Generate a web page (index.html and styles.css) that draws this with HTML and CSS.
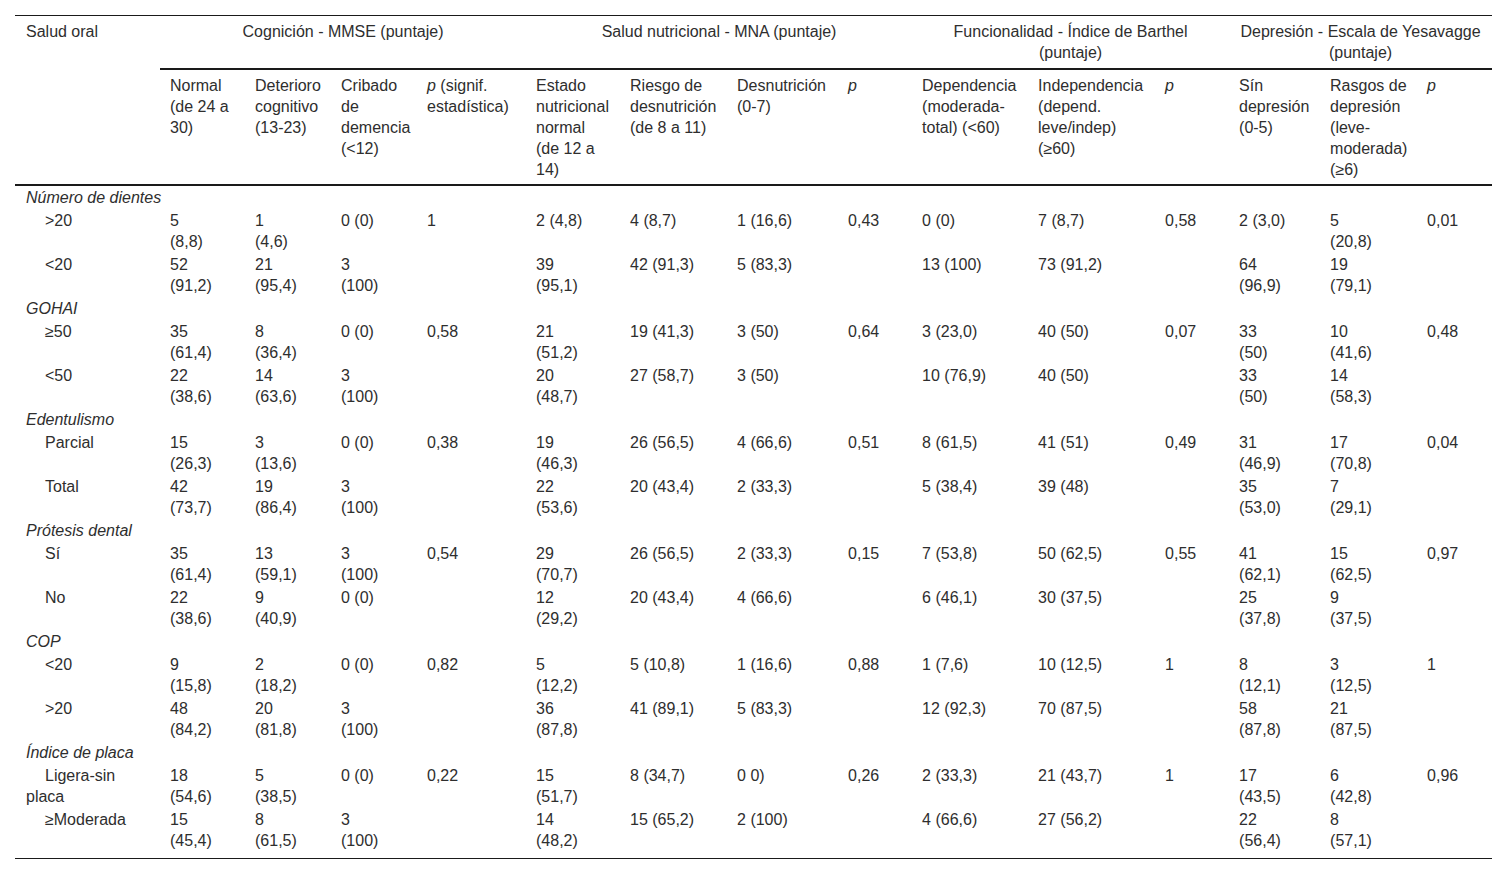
FILE: index.html
```html
<!DOCTYPE html>
<html lang="es">
<head>
<meta charset="utf-8">
<title>Salud oral</title>
<link rel="stylesheet" href="styles.css">
</head>
<body>
<div class="wrap">
<table class="tbl">
<colgroup>
<col class="c1"><col class="c2"><col class="c3"><col class="c4"><col class="c5"><col class="c6"><col class="c7"><col class="c8"><col class="c9"><col class="c10"><col class="c11"><col class="c12"><col class="c13"><col class="c14"><col class="c15">
</colgroup>
<thead>
<tr class="hr1">
<th class="h-first" rowspan="2">Salud oral</th>
<th class="h-group" colspan="4">Cognición - MMSE (puntaje)</th>
<th class="h-group" colspan="4">Salud nutricional - MNA (puntaje)</th>
<th class="h-group" colspan="3">Funcionalidad - Índice de Barthel<br>(puntaje)</th>
<th class="h-group" colspan="3">Depresión - Escala de Yesavagge<br>(puntaje)</th>
</tr>
<tr class="hr2">
<th class="h-sub">Normal<br>(de 24 a<br>30)</th>
<th class="h-sub">Deterioro<br>cognitivo<br>(13-23)</th>
<th class="h-sub">Cribado<br>de<br>demencia<br>(&lt;12)</th>
<th class="h-sub"><i>p</i> (signif.<br>estadística)</th>
<th class="h-sub">Estado<br>nutricional<br>normal<br>(de 12 a<br>14)</th>
<th class="h-sub">Riesgo de<br>desnutrición<br>(de 8 a 11)</th>
<th class="h-sub">Desnutrición<br>(0-7)</th>
<th class="h-sub"><i>p</i></th>
<th class="h-sub">Dependencia<br>(moderada-<br>total) (&lt;60)</th>
<th class="h-sub">Independencia<br>(depend.<br>leve/indep)<br>(≥60)</th>
<th class="h-sub"><i>p</i></th>
<th class="h-sub">Sín<br>depresión<br>(0-5)</th>
<th class="h-sub">Rasgos de<br>depresión<br>(leve-<br>moderada)<br>(≥6)</th>
<th class="h-sub"><i>p</i></th>
</tr>
</thead>
<tbody>
<tr class="cat"><td colspan="15">Número de dientes</td></tr>
<tr><td class="lbl">&gt;20</td><td>5<br>(8,8)</td><td>1<br>(4,6)</td><td>0 (0)</td><td>1</td><td>2 (4,8)</td><td>4 (8,7)</td><td>1 (16,6)</td><td>0,43</td><td>0 (0)</td><td>7 (8,7)</td><td>0,58</td><td>2 (3,0)</td><td>5<br>(20,8)</td><td>0,01</td></tr>
<tr><td class="lbl">&lt;20</td><td>52<br>(91,2)</td><td>21<br>(95,4)</td><td>3<br>(100)</td><td></td><td>39<br>(95,1)</td><td>42 (91,3)</td><td>5 (83,3)</td><td></td><td>13 (100)</td><td>73 (91,2)</td><td></td><td>64<br>(96,9)</td><td>19<br>(79,1)</td><td></td></tr>
<tr class="cat"><td colspan="15">GOHAI</td></tr>
<tr><td class="lbl">≥50</td><td>35<br>(61,4)</td><td>8<br>(36,4)</td><td>0 (0)</td><td>0,58</td><td>21<br>(51,2)</td><td>19 (41,3)</td><td>3 (50)</td><td>0,64</td><td>3 (23,0)</td><td>40 (50)</td><td>0,07</td><td>33<br>(50)</td><td>10<br>(41,6)</td><td>0,48</td></tr>
<tr><td class="lbl">&lt;50</td><td>22<br>(38,6)</td><td>14<br>(63,6)</td><td>3<br>(100)</td><td></td><td>20<br>(48,7)</td><td>27 (58,7)</td><td>3 (50)</td><td></td><td>10 (76,9)</td><td>40 (50)</td><td></td><td>33<br>(50)</td><td>14<br>(58,3)</td><td></td></tr>
<tr class="cat"><td colspan="15">Edentulismo</td></tr>
<tr><td class="lbl">Parcial</td><td>15<br>(26,3)</td><td>3<br>(13,6)</td><td>0 (0)</td><td>0,38</td><td>19<br>(46,3)</td><td>26 (56,5)</td><td>4 (66,6)</td><td>0,51</td><td>8 (61,5)</td><td>41 (51)</td><td>0,49</td><td>31<br>(46,9)</td><td>17<br>(70,8)</td><td>0,04</td></tr>
<tr><td class="lbl">Total</td><td>42<br>(73,7)</td><td>19<br>(86,4)</td><td>3<br>(100)</td><td></td><td>22<br>(53,6)</td><td>20 (43,4)</td><td>2 (33,3)</td><td></td><td>5 (38,4)</td><td>39 (48)</td><td></td><td>35<br>(53,0)</td><td>7<br>(29,1)</td><td></td></tr>
<tr class="cat"><td colspan="15">Prótesis dental</td></tr>
<tr><td class="lbl">Sí</td><td>35<br>(61,4)</td><td>13<br>(59,1)</td><td>3<br>(100)</td><td>0,54</td><td>29<br>(70,7)</td><td>26 (56,5)</td><td>2 (33,3)</td><td>0,15</td><td>7 (53,8)</td><td>50 (62,5)</td><td>0,55</td><td>41<br>(62,1)</td><td>15<br>(62,5)</td><td>0,97</td></tr>
<tr><td class="lbl">No</td><td>22<br>(38,6)</td><td>9<br>(40,9)</td><td>0 (0)</td><td></td><td>12<br>(29,2)</td><td>20 (43,4)</td><td>4 (66,6)</td><td></td><td>6 (46,1)</td><td>30 (37,5)</td><td></td><td>25<br>(37,8)</td><td>9<br>(37,5)</td><td></td></tr>
<tr class="cat"><td colspan="15">COP</td></tr>
<tr><td class="lbl">&lt;20</td><td>9<br>(15,8)</td><td>2<br>(18,2)</td><td>0 (0)</td><td>0,82</td><td>5<br>(12,2)</td><td>5 (10,8)</td><td>1 (16,6)</td><td>0,88</td><td>1 (7,6)</td><td>10 (12,5)</td><td>1</td><td>8<br>(12,1)</td><td>3<br>(12,5)</td><td>1</td></tr>
<tr><td class="lbl">&gt;20</td><td>48<br>(84,2)</td><td>20<br>(81,8)</td><td>3<br>(100)</td><td></td><td>36<br>(87,8)</td><td>41 (89,1)</td><td>5 (83,3)</td><td></td><td>12 (92,3)</td><td>70 (87,5)</td><td></td><td>58<br>(87,8)</td><td>21<br>(87,5)</td><td></td></tr>
<tr class="cat"><td colspan="15">Índice de placa</td></tr>
<tr><td class="lbl">Ligera-sin<br>placa</td><td>18<br>(54,6)</td><td>5<br>(38,5)</td><td>0 (0)</td><td>0,22</td><td>15<br>(51,7)</td><td>8 (34,7)</td><td>0 0)</td><td>0,26</td><td>2 (33,3)</td><td>21 (43,7)</td><td>1</td><td>17<br>(43,5)</td><td>6<br>(42,8)</td><td>0,96</td></tr>
<tr class="last"><td class="lbl">≥Moderada</td><td>15<br>(45,4)</td><td>8<br>(61,5)</td><td>3<br>(100)</td><td></td><td>14<br>(48,2)</td><td>15 (65,2)</td><td>2 (100)</td><td></td><td>4 (66,6)</td><td>27 (56,2)</td><td></td><td>22<br>(56,4)</td><td>8<br>(57,1)</td><td></td></tr>
</tbody>
</table>
</div>
</body>
</html>
```

FILE: styles.css
```css
html, body {
  margin: 0;
  padding: 0;
  background: #fff;
}

.wrap {
  padding: 15px 0 0 15px;
}

.tbl {
  table-layout: fixed;
  width: 1477px;
  border-collapse: separate;
  border-spacing: 0;
  font-family: "Liberation Sans", Arial, sans-serif;
  font-size: 16px;
  line-height: 21px;
  color: #2e2e2e;
}

.c1 { width: 145px; }
.c2 { width: 85px; }
.c3 { width: 86px; }
.c4 { width: 86px; }
.c5 { width: 109px; }
.c6 { width: 94px; }
.c7 { width: 107px; }
.c8 { width: 111px; }
.c9 { width: 74px; }
.c10 { width: 116px; }
.c11 { width: 127px; }
.c12 { width: 74px; }
.c13 { width: 91px; }
.c14 { width: 97px; }
.c15 { width: 75px; }

.tbl th {
  font-weight: normal;
  vertical-align: top;
  text-align: left;
}

.h-first {
  padding: 5px 4px 4px 11px;
  border-top: 1px solid #1a1a1a;
  border-bottom: 2px solid #1a1a1a;
}

.h-group {
  text-align: center !important;
  padding: 5px 10px;
  border-top: 1px solid #1a1a1a;
  border-bottom: 2px solid #1a1a1a;
}

.h-sub {
  padding: 5px 4px 4px 10px;
  border-bottom: 2px solid #1a1a1a;
}

.tbl td {
  vertical-align: top;
  text-align: left;
  padding: 1px 4px 1px 10px;
}

.tbl td.lbl {
  padding-left: 11px;
  text-indent: 19px;
}

.cat td {
  font-style: italic;
  padding-left: 11px;
}

.last td {
  padding-bottom: 7px;
  border-bottom: 1px solid #1a1a1a;
}
```
